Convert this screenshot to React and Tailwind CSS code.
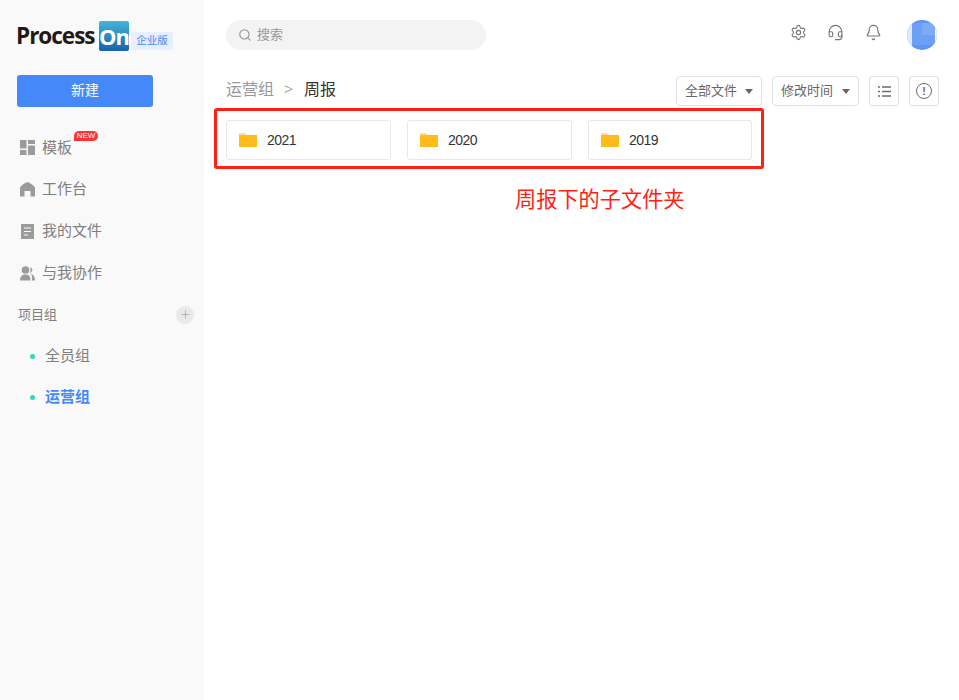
import { Settings, Headset, Bell, Search, Plus } from "lucide-react";

const font = { fontFamily: '"Liberation Sans", "Noto Sans CJK SC", sans-serif' };
const logoFont = { fontFamily: '"Open Sans", sans-serif' };

function TemplateIcon() {
  return (
    <svg width="15" height="15" viewBox="0 0 15 15" fill="#9b9b9b">
      <rect x="0" y="0" width="6.5" height="8.5" />
      <rect x="8" y="0" width="7" height="4" />
      <rect x="0" y="10" width="6.5" height="5" />
      <rect x="8" y="5.5" width="7" height="9.5" />
    </svg>
  );
}

function HomeIcon() {
  return (
    <svg width="15" height="15" viewBox="0 0 15 15" fill="#9b9b9b">
      <path d="M7.5 0 C10.5 1.2 13.5 3 15 5.5 V14.5 H10.5 V9 H4.5 V14.5 H0 V5.5 C1.5 3 4.5 1.2 7.5 0 Z" />
    </svg>
  );
}

function FileIcon() {
  return (
    <svg width="15" height="15" viewBox="0 0 15 15">
      <rect x="1" y="0" width="13" height="15" fill="#9b9b9b" />
      <path d="M4 4H11M4 7.5H11M4 11H8" stroke="#f9f9f9" strokeWidth="1" />
    </svg>
  );
}

function PeopleIcon() {
  return (
    <svg width="15" height="15" viewBox="0 0 15 15" fill="#9b9b9b">
      <circle cx="5.5" cy="4" r="3.8" />
      <path d="M0 14.5 C0 10 2.5 8.5 5.5 8.5 C8.5 8.5 10.5 10 10.5 14.5 Z" />
      <path d="M10 1.2 C12 1.4 12.6 3 12.3 4.4 C12 5.8 11 6.6 10 6.8 C10.8 5.2 10.8 2.8 10 1.2 Z" />
      <path d="M11 8 C13.5 8.5 15 10.5 15 14.5 H12 C12 12 12 10 11 8 Z" />
    </svg>
  );
}

function FolderIcon() {
  return (
    <svg width="18" height="14" viewBox="0 0 18 14">
      <path d="M0 1 Q0 0 1 0 H6 L8 2 H0 Z" fill="#ffdf8a" />
      <rect x="0" y="2" width="18" height="12" fill="#ffbb1c" />
    </svg>
  );
}

function ListIcon() {
  return (
    <svg width="13" height="11" viewBox="0 0 13 11" stroke="#6b6b6b" strokeWidth="1.3">
      <path d="M0 1H2M4 1H13M0 5.5H2M4 5.5H13M0 10H2M4 10H13" />
    </svg>
  );
}

function NavItem({ icon, label, badge }) {
  return (
    <div className={`relative flex items-center pl-[20px] text-[15px] text-[#7f7f7f] ${badge ? "h-[41px]" : "h-[42px]"}`}>
      <span className="mr-[7px] flex w-[15px]">{icon}</span>
      <span className={badge ? "pt-[2px]" : ""}>{label}</span>
      {badge && (
        <span className="absolute left-[74px] top-[4px] flex h-[10px] w-[24px] items-center justify-center rounded-full rounded-bl-none bg-[#ff3333] text-[8px] leading-none text-white">
          NEW
        </span>
      )}
    </div>
  );
}

function Group({ label, active }) {
  return (
    <div className="flex h-[41px] items-center pl-[30px]">
      <span className="mr-[10px] h-[5px] w-[5px] rounded-full bg-[#2ed8b6]" />
      <span className={active ? "text-[15px] font-bold text-[#4488fa]" : "text-[15px] text-[#7f7f7f]"}>{label}</span>
    </div>
  );
}

function Folder({ name, width = "w-[165px]" }) {
  return (
    <div className={`flex h-[40px] ${width} items-center gap-[10px] rounded-[3px] border border-[#e8e8e8] pl-[12px] text-[14px] tracking-[-0.5px] text-[#333]`}>
      <FolderIcon />
      <span className="pt-[1px]">{name}</span>
    </div>
  );
}

function Dropdown({ label, width }) {
  return (
    <div className={`flex h-[30px] ${width} items-center justify-between rounded-[4px] border border-[#dfe0e6] px-[8px] text-[13px] text-[#666]`}>
      <span>{label}</span>
      <span className="h-0 w-0 border-x-[4.5px] border-t-[5px] border-x-transparent border-t-[#666]" />
    </div>
  );
}

export default function App() {
  return (
    <div className="relative flex h-[700px] w-[959px] overflow-hidden bg-white" style={font}>
      <aside className="w-[204px] shrink-0 bg-[#f9f9f9]">
        <div className="flex h-[75px] items-start pl-[16px] pt-[21px]">
          <span className="w-[80px] text-[22.5px] font-bold leading-[30px] tracking-[-1px] text-[#231815]" style={logoFont}>Process</span>
          <span className="ml-[3px] flex h-[30px] w-[30px] items-center justify-center rounded-[2px] bg-gradient-to-b from-[#45b5d8] to-[#1763ac] text-[22px] font-bold leading-none tracking-[-1px] text-white" style={logoFont}>On</span>
          <span className="ml-[2px] mt-[11px] flex h-[18px] w-[42px] items-center justify-center rounded-[2px] bg-[#e6efff] text-[10.5px] text-[#4488fa]">企业版</span>
        </div>
        <button className="ml-[17px] h-[32px] w-[136px] rounded-[3px] bg-[#4488fa] pb-[1px] text-[14px] text-white">新建</button>
        <div className="mt-[20px]">
          <NavItem icon={<TemplateIcon />} label="模板" badge />
          <NavItem icon={<HomeIcon />} label="工作台" />
          <NavItem icon={<FileIcon />} label="我的文件" />
          <NavItem icon={<PeopleIcon />} label="与我协作" />
        </div>
        <div className="mb-[1px] flex h-[41px] items-center justify-between pl-[18px] pr-[10px] text-[13px] text-[#7f7f7f]">
          <span>项目组</span>
          <span className="flex h-[18px] w-[18px] items-center justify-center rounded-full bg-[#e9e9e9]">
            <Plus size={13} strokeWidth={1} color="#888" />
          </span>
        </div>
        <Group label="全员组" />
        <Group label="运营组" active />
      </aside>

      <main className="relative flex-1 pl-[22px]">
        <header className="flex h-[76px] items-start pt-[20px]">
          <div className="flex h-[30px] w-[260px] items-center gap-[5px] rounded-full bg-[#f3f3f3] pl-[12px] text-[13px] text-[#999]">
            <Search size={14} strokeWidth={1.8} color="#8f8f8f" />
            <span>搜索</span>
          </div>
          <div className="ml-[304px] flex items-center pt-[4px] text-[#757575]">
            <Settings size={17} strokeWidth={1.6} />
            <Headset size={17} strokeWidth={1.6} className="ml-[20px]" />
            <Bell size={17} strokeWidth={1.6} className="ml-[21px]" />
          </div>
          <div className="ml-[25px] flex h-[30px] w-[30px] overflow-hidden rounded-full bg-[#5c95f5]">
            <div className="h-full w-[5px] bg-[#dce8fc]" />
            <div className="mt-[3px] flex h-[22px] flex-1 justify-end bg-[#6ca0f7]">
              <div className="h-[12px] w-[13px] bg-[#7dabf8]" />
            </div>
            <div className="h-full w-[2px] bg-[#f5f8fe]" />
          </div>
        </header>

        <div className="flex h-[30px] items-center justify-between pr-[20px]">
          <div className="-mt-[3px] flex items-center text-[16px]">
            <span className="text-[#999]">运营组</span>
            <span className="mx-[10px] w-[10px] text-[15px] text-[#aaa]">&gt;</span>
            <span className="text-[#333]">周报</span>
          </div>
          <div className="flex items-center">
            <Dropdown label="全部文件" width="w-[86px]" />
            <span className="w-[10px]" />
            <Dropdown label="修改时间" width="w-[87px]" />
            <span className="ml-[10px] flex h-[30px] w-[30px] items-center justify-center rounded-[3px] border border-[#dfe0e6]">
              <ListIcon />
            </span>
            <span className="ml-[10px] flex h-[30px] w-[30px] items-center justify-center rounded-[3px] border border-[#dfe0e6]">
              <span className="flex h-[16px] w-[16px] items-center justify-center rounded-full border-[1.5px] border-[#6b6b6b] text-[11px] font-bold leading-none text-[#6b6b6b]">!</span>
            </span>
          </div>
        </div>

        <div className="mt-[14px] flex gap-[16px]">
          <Folder name="2021" />
          <Folder name="2020" />
          <Folder name="2019" width="w-[164px]" />
        </div>

        <div className="absolute left-[10px] top-[108px] h-[61px] w-[550px] rounded-[3px] border-[3px] border-[#ff1f14]" />
        <div className="absolute left-[311px] top-[185px] text-[21.2px] leading-[30px] text-[#ff1f14]">周报下的子文件夹</div>
      </main>
    </div>
  );
}
